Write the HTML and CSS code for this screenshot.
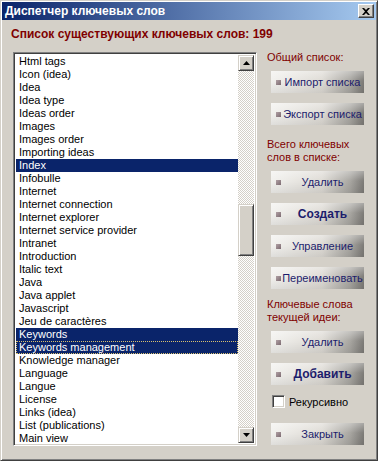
FILE: index.html
```html
<!DOCTYPE html>
<html lang="ru">
<head>
    <meta charset="UTF-8">
    <title>Диспетчер ключевых слов</title>
    <link rel="stylesheet" href="styles.css">
</head>
<body>
<div class="window">
    <div class="titlebar">
        <span class="title">Диспетчер ключевых слов</span>
        <div class="close">
            <svg width="8" height="7" viewBox="0 0 8 7"><path d="M0 0h2l2 2 2-2h2L5 3.5 8 7H6L4 5 2 7H0l3-3.5z" fill="#000"/></svg>
        </div>
    </div>
    <div class="content">
        <h1>Список существующих ключевых слов: 199</h1>
        <div class="main">
            <div class="listbox">
                <ul class="items">
                    <li>Html tags</li>
                    <li>Icon (idea)</li>
                    <li>Idea</li>
                    <li>Idea type</li>
                    <li>Ideas order</li>
                    <li>Images</li>
                    <li>Images order</li>
                    <li>Importing ideas</li>
                    <li class="sel">Index</li>
                    <li>Infobulle</li>
                    <li>Internet</li>
                    <li>Internet connection</li>
                    <li>Internet explorer</li>
                    <li>Internet service provider</li>
                    <li>Intranet</li>
                    <li>Introduction</li>
                    <li>Italic text</li>
                    <li>Java</li>
                    <li>Java applet</li>
                    <li>Javascript</li>
                    <li>Jeu de caractères</li>
                    <li class="sel">Keywords</li>
                    <li class="sel focus">Keywords management</li>
                    <li>Knowledge manager</li>
                    <li>Language</li>
                    <li>Langue</li>
                    <li>License</li>
                    <li>Links (idea)</li>
                    <li>List (publications)</li>
                    <li>Main view</li>
                </ul>
                <div class="scrollbar">
                    <div class="arrow"><svg width="7" height="4" viewBox="0 0 7 4"><path d="M3.5 0L7 4H0z" fill="#000"/></svg></div>
                    <div class="track"><div class="thumb"></div></div>
                    <div class="arrow"><svg width="7" height="4" viewBox="0 0 7 4"><path d="M0 0h7L3.5 4z" fill="#000"/></svg></div>
                </div>
            </div>
            <div class="side">
                <div class="lbl first">Общий список:</div>
                <div class="btn"><i></i><span>Импорт списка</span></div>
                <div class="btn"><i></i><span>Экспорт списка</span></div>
                <div class="lbl">Всего ключевых<br>слов в списке:</div>
                <div class="btn"><i></i><span>Удалить</span></div>
                <div class="btn bold"><i></i><span>Создать</span></div>
                <div class="btn"><i></i><span>Управление</span></div>
                <div class="btn"><i></i><span>Переименовать</span></div>
                <div class="lbl idea">Ключевые слова<br>текущей идеи:</div>
                <div class="btn"><i></i><span>Удалить</span></div>
                <div class="btn bold"><i></i><span>Добавить</span></div>
                <label class="check"><span class="box"></span>Рекурсивно</label>
                <div class="btn close-btn"><i></i><span>Закрыть</span></div>
            </div>
        </div>
    </div>
</div>
</body>
</html>
```

FILE: styles.css
```css
body {
    margin: 0;
    font-family: "Liberation Sans", Arial, sans-serif;
    font-size: 11px;
    background: #d4d0c8;
}
.window {
    width: 378px;
    height: 461px;
    box-sizing: border-box;
    background: #d4d0c8;
    border: 1px solid;
    border-color: #d4d0c8 #404040 #404040 #d4d0c8;
    box-shadow: inset 1px 1px 0 #fff, inset -1px -1px 0 #808080;
    padding: 1px;
}
.titlebar {
    height: 18px;
    background: linear-gradient(to right, #0a246a, #a6caf0);
    display: flex;
    align-items: center;
    justify-content: space-between;
    padding: 0 2px 0 3px;
}
.title {
    color: #fff;
    font-weight: bold;
    font-size: 12px;
}
.close {
    width: 16px;
    height: 14px;
    box-sizing: border-box;
    background: #d4d0c8;
    border: 1px solid;
    border-color: #fff #404040 #404040 #fff;
    box-shadow: inset -1px -1px 0 #808080;
    display: flex;
    align-items: center;
    justify-content: center;
}
.content {
    padding: 0 0 0 9px;
}
h1 {
    margin: 7px 0 0;
    height: 25px;
    font-size: 12px;
    color: #800000;
}
.main {
    display: flex;
}
.listbox {
    margin-left: 2px;
    width: 244px;
    height: 394px;
    box-sizing: border-box;
    border: 1px solid;
    border-color: #808080 #fff #fff #808080;
    box-shadow: inset 1px 1px 0 #404040, inset -1px -1px 0 #d4d0c8;
    padding: 2px;
    display: flex;
    overflow: hidden;
    background: #fff;
}
.items {
    list-style: none;
    margin: 0;
    padding: 0;
    flex: 1;
    overflow: hidden;
}
.items li {
    height: 13px;
    line-height: 13px;
    padding-left: 3px;
    color: #000;
    white-space: nowrap;
}
.items .sel {
    background: #0a246a;
    color: #fff;
}
.items .focus {
    outline: 1px dotted #d8c070;
    outline-offset: -1px;
}
.scrollbar {
    width: 16px;
    display: flex;
    flex-direction: column;
}
.arrow, .thumb {
    box-sizing: border-box;
    background: #d4d0c8;
    border: 1px solid;
    border-color: #d4d0c8 #404040 #404040 #d4d0c8;
    box-shadow: inset 1px 1px 0 #fff, inset -1px -1px 0 #808080;
}
.arrow {
    height: 16px;
    display: flex;
    align-items: center;
    justify-content: center;
}
.track {
    flex: 1;
    background: repeating-conic-gradient(#d4d0c8 0 25%, #fff 0 50%) 0 0 / 2px 2px;
    padding-top: 133px;
}
.thumb {
    height: 52px;
}
.side {
    margin-left: 10px;
    display: flex;
    flex-direction: column;
    align-items: flex-start;
}
.lbl {
    color: #800000;
    font-size: 11px;
    line-height: 13px;
    margin-top: 13px;
}
.lbl.first {
    margin-top: -1px;
}
.lbl.idea {
    margin-top: 9px;
}
.btn {
    margin: 10px 0 0 4px;
    width: 93px;
    height: 22px;
    display: flex;
    align-items: center;
    background:
        linear-gradient(to bottom, rgba(255,255,255,0.35), rgba(255,255,255,0) 45%, rgba(0,0,0,0.08)),
        linear-gradient(to right, #f2f1ee 0%, #dedbd5 55%, #a9a7a2 85%, #7c7a76 100%);
    color: #1c1c6c;
    font-size: 11px;
}
.lbl + .btn {
    margin-top: 7px;
}
.btn i {
    flex-shrink: 0;
    width: 5px;
    height: 5px;
    margin-left: 5px;
    background: linear-gradient(135deg, #b0a0a4, #7c6a70);
}
.btn span {
    flex: 1;
    text-align: center;
    white-space: nowrap;
}
.btn.bold {
    font-weight: bold;
    font-size: 12px;
}
.check {
    margin: 10px 0 0 5px;
    display: flex;
    align-items: center;
    font-size: 11px;
    color: #000;
    height: 13px;
}
.box {
    width: 13px;
    height: 13px;
    box-sizing: border-box;
    background: #fff;
    border: 1px solid;
    border-color: #808080 #fff #fff #808080;
    box-shadow: inset 1px 1px 0 #404040, inset -1px -1px 0 #d4d0c8;
    margin-right: 4px;
}
.close-btn {
    margin-top: 15px;
}
```
